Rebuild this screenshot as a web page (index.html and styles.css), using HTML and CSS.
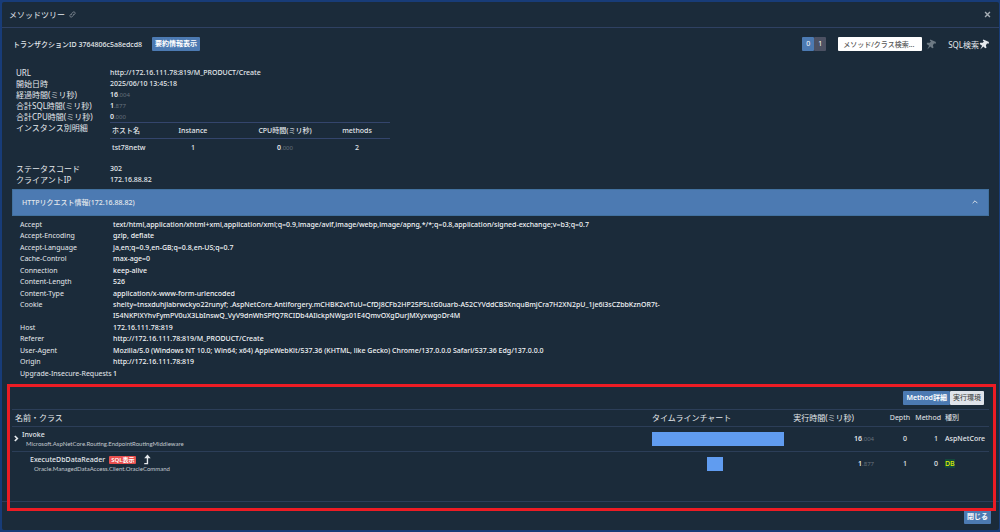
FILE: index.html
```html
<!DOCTYPE html>
<html lang="ja">
<head>
    <meta charset="UTF-8">
    <meta name="viewport" content="width=device-width, initial-scale=1.0">
    <title>メソッドツリー</title>
    <link rel="stylesheet" href="styles.css">
</head>
<body>
    <div class="dialog" role="dialog" aria-labelledby="dialogTitle">
        <header class="dialog-header">
            <h1 id="dialogTitle">メソッドツリー</h1>
            <a class="link-icon" href="#" aria-label="リンク">
                <svg viewBox="0 0 16 16" width="7" height="7" fill="none" stroke="currentColor" stroke-width="1.6"><path d="M6.5 9.5a3 3 0 0 1 0-4.2l2.8-2.8a3 3 0 0 1 4.2 4.2L11.4 8.8M9.5 6.5a3 3 0 0 1 0 4.2l-2.8 2.8a3 3 0 0 1-4.2-4.2L4.6 7.2"/></svg>
            </a>
            <button class="icon-button close-x" type="button" aria-label="閉じる">
                <svg viewBox="0 0 10 10" width="7" height="7" stroke="currentColor" stroke-width="2"><path d="M1.5 1.5l7 7M8.5 1.5l-7 7"/></svg>
            </button>
        </header>

        <div class="toolbar">
            <span class="transaction">トランザクションID 3764806c5a8edcd8</span>
            <button class="btn" type="button">要約情報表示</button>
            <div class="toolbar-right">
                <div class="group">
                    <button class="btn count" type="button">0</button>
                    <button class="btn count count-off" type="button">1</button>
                </div>
                <input class="search" type="text" placeholder="メソッド/クラス検索..." aria-label="メソッド/クラス検索">
                <button class="icon-button pin" type="button" aria-label="固定">
                    <svg viewBox="0 0 16 16" width="10" height="11" fill="currentColor"><path d="M7 0l9 4-1 3-2-1-2 3 1 4-2 1-3-3-5 5 3-6-4-3 1-2h4l2-2-2-1z"/></svg>
                </button>
                <button class="icon-button sql-search" type="button">SQL検索
                    <svg viewBox="0 0 16 16" width="10" height="11" fill="currentColor"><path d="M7 0l9 4-1 3-2-1-2 3 1 4-2 1-3-3-5 5 3-6-4-3 1-2h4l2-2-2-1z"/></svg>
                </button>
            </div>
        </div>

        <main>
            <dl class="summary">
                <dt>URL</dt><dd>http://172.16.111.78:819/M_PRODUCT/Create</dd>
                <dt>開始日時</dt><dd>2025/06/10 13:45:18</dd>
                <dt>経過時間(ミリ秒)</dt><dd><b>16</b><small>.004</small></dd>
                <dt>合計SQL時間(ミリ秒)</dt><dd><b>1</b><small>.877</small></dd>
                <dt>合計CPU時間(ミリ秒)</dt><dd><b>0</b><small>.000</small></dd>
                <dt>インスタンス別明細</dt>
                <dd>
                    <table class="instances">
                        <thead>
                            <tr><th class="host">ホスト名</th><th>Instance</th><th class="cpu">CPU時間(ミリ秒)</th><th>methods</th></tr>
                        </thead>
                        <tbody>
                            <tr><td class="host">tst78netw</td><td>1</td><td class="cpu"><b>0</b><small>.000</small></td><td>2</td></tr>
                        </tbody>
                    </table>
                </dd>
                <dt>ステータスコード</dt><dd>302</dd>
                <dt>クライアントIP</dt><dd>172.16.88.82</dd>
            </dl>

            <button class="accordion" type="button" aria-expanded="true">
                <span>HTTPリクエスト情報(172.16.88.82)</span>
                <svg viewBox="0 0 10 6" width="6" height="4" fill="none" stroke="currentColor" stroke-width="1.5"><path d="M1 5l4-4 4 4"/></svg>
            </button>

            <dl class="headers">
                <div><dt>Accept</dt><dd>text/html,application/xhtml+xml,application/xml;q=0.9,image/avif,image/webp,image/apng,*/*;q=0.8,application/signed-exchange;v=b3;q=0.7</dd></div>
                <div><dt>Accept-Encoding</dt><dd>gzip, deflate</dd></div>
                <div><dt>Accept-Language</dt><dd>ja,en;q=0.9,en-GB;q=0.8,en-US;q=0.7</dd></div>
                <div><dt>Cache-Control</dt><dd>max-age=0</dd></div>
                <div><dt>Connection</dt><dd>keep-alive</dd></div>
                <div><dt>Content-Length</dt><dd>526</dd></div>
                <div><dt>Content-Type</dt><dd>application/x-www-form-urlencoded</dd></div>
                <div><dt>Cookie</dt><dd>shelty=tnsxduhjlabrwckyo22runyf; .AspNetCore.Antiforgery.mCHBK2vtTuU=CfDJ8CFb2HP25P5LtG0uarb-A52CYVddCBSXnquBmjCra7H2XN2pU_1je6i3sCZbbKznOR7t-<br>I54NKPlXYhvFymPV0uX3LbInswQ_VyV9dnWhSPfQ7RCIDb4AIickpNWgs01E4QmvOXgDurJMXyxwgoDr4M</dd></div>
                <div><dt>Host</dt><dd>172.16.111.78:819</dd></div>
                <div><dt>Referer</dt><dd>http://172.16.111.78:819/M_PRODUCT/Create</dd></div>
                <div><dt>User-Agent</dt><dd>Mozilla/5.0 (Windows NT 10.0; Win64; x64) AppleWebKit/537.36 (KHTML, like Gecko) Chrome/137.0.0.0 Safari/537.36 Edg/137.0.0.0</dd></div>
                <div><dt>Origin</dt><dd>http://172.16.111.78:819</dd></div>
                <div><dt>Upgrade-Insecure-Requests</dt><dd>1</dd></div>
            </dl>

            <section class="methods">
                <div class="group method-tabs">
                    <button class="btn" type="button">Method詳細</button>
                    <button class="btn btn-light" type="button">実行環境</button>
                </div>
                <table class="tree">
                    <thead>
                        <tr>
                            <th class="name">名前・クラス</th>
                            <th class="timeline">タイムラインチャート</th>
                            <th class="time">実行時間(ミリ秒)</th>
                            <th class="depth">Depth</th>
                            <th class="count-col">Method</th>
                            <th class="type">種別</th>
                        </tr>
                    </thead>
                    <tbody>
                        <tr>
                            <td class="name">
                                <div class="node">
                                    <button class="icon-button toggle" type="button" aria-label="展開">
                                        <svg viewBox="0 0 6 8" width="5" height="7" fill="none" stroke="currentColor" stroke-width="2"><path d="M1 1l3 3-3 3"/></svg>
                                    </button>
                                    <div>
                                        <div class="method">Invoke</div>
                                        <div class="class-name">Microsoft.AspNetCore.Routing.EndpointRoutingMiddleware</div>
                                    </div>
                                </div>
                            </td>
                            <td class="timeline"><div class="bar" style="margin-left: 0%; width: 100%"></div></td>
                            <td class="time"><b>16</b><small>.004</small></td>
                            <td class="depth">0</td>
                            <td class="count-col">1</td>
                            <td class="type">AspNetCore</td>
                        </tr>
                        <tr>
                            <td class="name">
                                <div class="node child">
                                    <div>
                                        <div class="method">ExecuteDbDataReader
                                            <button class="badge" type="button">SQL表示</button>
                                            <svg viewBox="0 0 8 12" width="8" height="11" fill="none" stroke="currentColor" stroke-width="1.5"><path d="M1 10.5h3.5V3"/><path d="M1 4.5l3.5-4 3.5 4z" fill="currentColor" stroke="none"/></svg>
                                        </div>
                                        <div class="class-name">Oracle.ManagedDataAccess.Client.OracleCommand</div>
                                    </div>
                                </div>
                            </td>
                            <td class="timeline"><div class="bar" style="margin-left: 42%; width: 12%"></div></td>
                            <td class="time"><b>1</b><small>.877</small></td>
                            <td class="depth">1</td>
                            <td class="count-col">0</td>
                            <td class="type"><span class="db">DB</span></td>
                        </tr>
                    </tbody>
                </table>
            </section>
        </main>

        <footer class="dialog-footer">
            <button class="btn" type="button">閉じる</button>
        </footer>
        <div class="highlight"></div>
    </div>
</body>
</html>
```

FILE: styles.css
```css
* {
    box-sizing: border-box;
}
body {
    margin: 0;
    padding: 2px 1px 2px 2px;
    min-height: 100vh;
    display: flex;
    background-color: #183c78;
    color: #e4e8ec;
    font-family: "Noto Sans", "Noto Sans CJK JP", sans-serif;
    font-size: 7px;
    font-weight: 500;
    line-height: 11px;
}
h1, dl, dd {
    margin: 0;
}
button, input {
    font: inherit;
    color: inherit;
}
svg {
    display: block;
}
small {
    font-size: 6px;
    font-weight: 400;
    line-height: 6px;
    color: #66727d;
}
b {
    font-weight: 600;
}
.dialog {
    position: relative;
    flex: 1;
    min-width: 0;
    display: flex;
    flex-direction: column;
    background-color: #1b2b3a;
    border-radius: 2px;
}
.dialog-header {
    display: flex;
    align-items: center;
    gap: 4px;
    height: 26px;
    padding: 0 7px;
    border-bottom: 1px solid #2f4162;
}
.dialog-header h1 {
    font-size: 8px;
    font-weight: 400;
}
.link-icon {
    color: #929ba3;
}
.icon-button {
    padding: 0;
    border: none;
    background: none;
    cursor: pointer;
}
.close-x {
    margin-left: auto;
    margin-right: 1px;
    color: #a5adb4;
}
.toolbar {
    display: flex;
    align-items: center;
    gap: 10px;
    height: 32px;
    padding: 0 10px 0 11px;
}
.toolbar-right {
    display: flex;
    align-items: center;
    margin-left: auto;
}
.btn {
    height: 14px;
    padding: 0 3px;
    border: none;
    border-radius: 1px;
    background-color: #4c7ab2;
    color: #ffffff;
    font-weight: 600;
    line-height: 14px;
    cursor: pointer;
}
.group {
    display: flex;
}
.count {
    width: 12px;
    font-weight: 400;
}
.count-off {
    background-color: #4c5163;
}
.search {
    width: 84px;
    height: 14px;
    margin: 0 4px 0 12px;
    padding: 0 5px;
    border: none;
    border-radius: 1px;
    background-color: #ffffff;
    color: #333333;
}
.search::placeholder {
    color: #555555;
}
.pin {
    color: #6d7983;
}
.sql-search {
    display: flex;
    align-items: center;
    margin-left: 12px;
    font-size: 8px;
    font-weight: 400;
}
main {
    flex: 1;
    padding: 2px 10px 0;
}
.summary {
    display: grid;
    grid-template-columns: 94px 1fr;
    padding: 5px 0 4px 4px;
}
.summary dt {
    font-size: 8px;
    font-weight: 400;
}
.instances {
    width: 280px;
    margin: 0 0 9px;
    border-collapse: collapse;
    table-layout: fixed;
}
.instances th {
    height: 16px;
    padding: 0;
    border-top: 1px solid #34456c;
    border-bottom: 1px solid #34456c;
    font-weight: 500;
}
.instances td {
    height: 15px;
    padding: 2px 0 0;
    text-align: center;
}
.instances .host {
    width: 50px;
    padding-left: 2px;
    text-align: left;
}
.instances .cpu {
    width: 98px;
    padding-left: 20px;
}
.accordion {
    display: flex;
    align-items: center;
    justify-content: space-between;
    width: 100%;
    height: 27px;
    padding: 0 10px 0 9px;
    border: 1px solid #42719f;
    background-color: #4c7ab2;
    cursor: pointer;
}
.headers {
    padding: 3px 8px 0;
}
.headers div {
    display: grid;
    grid-template-columns: 93px 1fr;
}
.headers div:nth-child(even) {
    padding-bottom: 1px;
}
.headers dt {
    white-space: nowrap;
    font-weight: 400;
}
.headers dd {
    color: #f3f5f7;
}
.methods {
    padding-top: 12px;
}
.method-tabs {
    justify-content: flex-end;
    margin: 0 5px 4px 0;
}
.btn-light {
    background-color: #dfe3ea;
    color: #333333;
    font-weight: 400;
}
.tree {
    width: 100%;
    border-collapse: collapse;
    table-layout: fixed;
}
.tree th {
    height: 17px;
    padding: 0;
    border-top: 1px solid #2c3e58;
    font-weight: 400;
    text-align: left;
}
.tree td {
    height: 25px;
    padding: 0;
    border-top: 1px solid #2c3e58;
}
.tree th.name {
    padding-left: 3px;
    font-size: 8px;
}
.tree .timeline {
    width: 132px;
}
.tree th.timeline {
    font-size: 8px;
}
.tree .time {
    width: 90px;
    text-align: right;
}
.tree th.time {
    padding-right: 20px;
    font-size: 8px;
    white-space: nowrap;
}
.tree .depth {
    width: 36px;
    text-align: right;
}
.tree td.depth {
    padding-right: 3px;
}
.tree .count-col {
    width: 31px;
    text-align: right;
}
.tree td.count-col {
    padding-right: 3px;
}
.tree .type {
    width: 48px;
    padding-left: 4px;
}
.node {
    display: flex;
    align-items: center;
    gap: 3px;
    padding-left: 2px;
}
.child {
    padding-left: 18px;
}
.method {
    display: flex;
    align-items: center;
    gap: 4px;
    height: 10px;
}
.method svg {
    margin-left: 3px;
}
.class-name {
    padding-left: 4px;
    font-family: Lato, sans-serif;
    font-size: 6px;
    font-weight: 400;
    line-height: 8px;
    color: #c2c9cf;
}
.badge {
    height: 8px;
    padding: 0 2px;
    border: none;
    border-radius: 1px;
    background-color: #e9504f;
    color: #ffffff;
    font-size: 6px;
    font-weight: 600;
    line-height: 8px;
    cursor: pointer;
}
.bar {
    height: 14px;
    background-color: #609cf0;
}
.db {
    background-color: #12483c;
    color: #dff000;
}
.dialog-footer {
    display: flex;
    justify-content: flex-end;
    height: 29px;
    padding: 8px 8px 0;
    border-top: 1px solid #2c3e58;
}
.highlight {
    position: absolute;
    inset: 382px 3px 19px 5px;
    border: 3px solid #ed1c24;
    pointer-events: none;
}
```
